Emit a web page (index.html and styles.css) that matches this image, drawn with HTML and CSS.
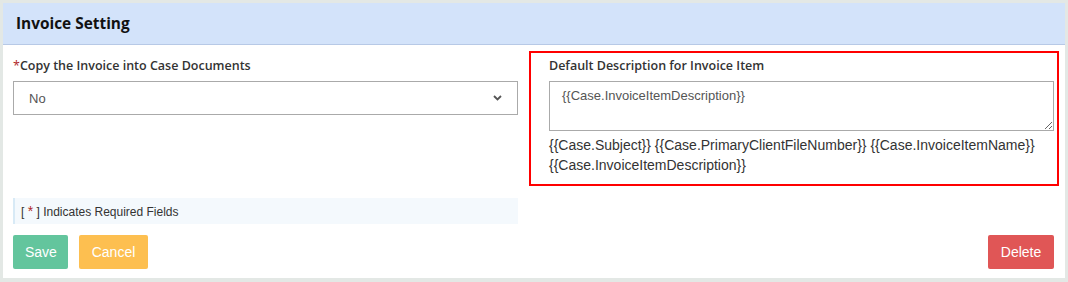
FILE: index.html
```html
<!DOCTYPE html>
<html lang="en">
<head>
  <meta charset="UTF-8">
  <meta name="viewport" content="width=device-width, initial-scale=1.0">
  <title>Invoice Setting</title>
  <link rel="stylesheet" href="styles.css">
</head>
<body>
  <div class="card">
    <div class="card-header">Invoice Setting</div>
    <div class="card-body">
      <div class="form-row">
        <div class="field">
          <label class="field-label" for="copy-invoice"><span class="req">*</span>Copy the Invoice into Case Documents</label>
          <div class="select-wrap">
            <select id="copy-invoice">
              <option>No</option>
              <option>Yes</option>
            </select>
            <svg class="chevron" width="9" height="6" viewBox="0 0 9 6"><path d="M1 1 L4.5 4.5 L8 1" fill="none" stroke="#555" stroke-width="1.8"/></svg>
          </div>
        </div>

        <div class="field field-highlight">
          <label class="field-label" for="item-desc">Default Description for Invoice Item</label>
          <textarea id="item-desc">{{Case.InvoiceItemDescription}}</textarea>
          <p class="hint">{{Case.Subject}} {{Case.PrimaryClientFileNumber}} {{Case.InvoiceItemName}} {{Case.InvoiceItemDescription}}</p>
        </div>
      </div>

      <div class="required-note">[ <span class="req">*</span> ] Indicates Required Fields</div>

      <div class="actions">
        <div class="actions-left">
          <button class="btn btn-save">Save</button>
          <button class="btn btn-cancel">Cancel</button>
        </div>
        <button class="btn btn-delete">Delete</button>
      </div>
    </div>
  </div>
</body>
</html>
```

FILE: styles.css
```css
body {
  margin: 0;
  padding: 3px;
  background-color: #e3e8e5;
  font-family: "Liberation Sans", Arial, sans-serif;
  color: #333;
}

.card {
  width: 1062px;
  height: 275px;
  background-color: #ffffff;
  box-sizing: border-box;
}

.card-header {
  height: 41px;
  line-height: 41px;
  padding-left: 13px;
  background-color: #d3e3fa;
  border-bottom: 1px solid #b7c9e6;
  font-family: "Open Sans", sans-serif;
  font-weight: 700;
  font-size: 15.4px;
  color: #111;
}

.card-body {
  padding: 6px 6px 9px 10px;
}

.form-row {
  display: grid;
  grid-template-columns: 505px 530px;
  column-gap: 11px;
}

.field {
  padding-top: 6px;
}

.field-label {
  display: block;
  font-family: "Open Sans", sans-serif;
  font-weight: 600;
  font-size: 12.5px;
  line-height: 18px;
  color: #333;
  margin-bottom: 6px;
}

.req {
  color: #b0262a;
  font-weight: 400;
}

.select-wrap {
  position: relative;
}

select {
  display: block;
  width: 100%;
  height: 34px;
  padding: 0 15px;
  border: 1px solid #aaa;
  border-radius: 0;
  background-color: #fff;
  font-family: "Liberation Sans", Arial, sans-serif;
  font-size: 13px;
  color: #555;
  appearance: none;
  -webkit-appearance: none;
  outline: none;
}

.chevron {
  position: absolute;
  right: 16px;
  top: 14px;
}

.field-highlight {
  border: 2px solid #ff0000;
  padding: 4px 3px 9px 18px;
}

textarea {
  display: block;
  width: 505px;
  height: 50px;
  box-sizing: border-box;
  padding: 6px 12px;
  border: 1px solid #aaa;
  font-family: "Liberation Sans", Arial, sans-serif;
  font-size: 13px;
  color: #555;
  resize: vertical;
  outline: none;
}

.hint {
  margin: 4px 0 0;
  font-size: 14px;
  line-height: 20px;
  color: #333;
}

.required-note {
  width: 505px;
  box-sizing: border-box;
  margin-top: 12px;
  height: 26px;
  line-height: 26px;
  padding-left: 6px;
  background-color: #f4f9fd;
  border-left: 2px solid #d8eaf6;
  font-size: 12px;
  color: #333;
}

.required-note .req {
  font-size: 14px;
}

.actions {
  display: flex;
  justify-content: space-between;
  margin-top: 11px;
  margin-right: 5px;
}

.actions-left {
  display: flex;
  gap: 11px;
}

.btn {
  height: 34px;
  padding: 0 12px;
  border: none;
  border-radius: 2px;
  font-family: "Liberation Sans", Arial, sans-serif;
  font-size: 14px;
  color: #ffffff;
  cursor: pointer;
}

.btn-save {
  width: 55px;
  background-color: #63c59d;
}

.btn-cancel {
  width: 69px;
  background-color: #fdbf50;
}

.btn-delete {
  width: 66px;
  background-color: #e05656;
}
```
